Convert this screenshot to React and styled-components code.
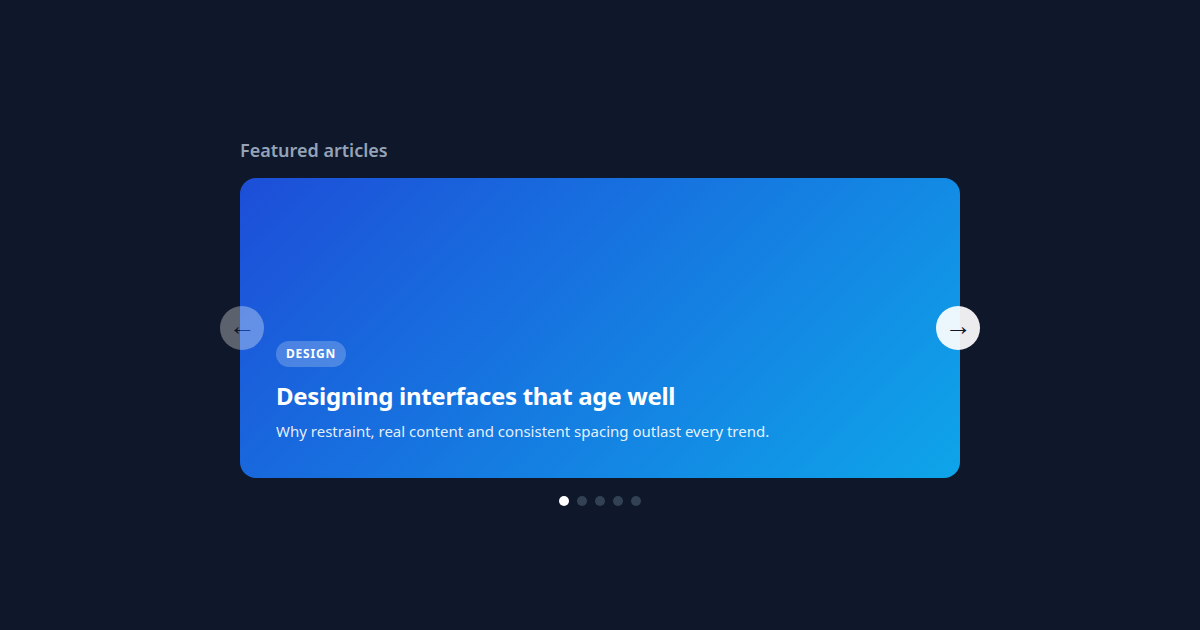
import styled, { createGlobalStyle } from "styled-components";

const GlobalStyle = createGlobalStyle`
  body {
    margin: 0;
    background: #0f172a;
    font-family: "Noto Sans", "Open Sans", sans-serif;
  }
`;

const Page = styled.div`
  width: 1200px;
  height: 630px;
  display: flex;
  align-items: center;
  justify-content: center;
`;

const Section = styled.section`
  width: 720px;
  display: flex;
  flex-direction: column;
  padding-top: 14px;
`;

const Heading = styled.h2`
  margin: 0 0 16px;
  font-size: 18px;
  font-weight: 600;
  color: #94a3b8;
  line-height: 24px;
`;

const Viewport = styled.div`
  position: relative;
`;

const Slide = styled.article`
  height: 300px;
  border-radius: 16px;
  background: linear-gradient(135deg, #1d4ed8 0%, #0ea5e9 100%);
  display: flex;
  flex-direction: column;
  justify-content: flex-end;
  padding: 0 36px 37px;
  box-sizing: border-box;
  color: #fff;
`;

const Tag = styled.span`
  align-self: flex-start;
  padding: 5px 10px;
  border-radius: 999px;
  background: rgba(255, 255, 255, 0.22);
  font-size: 12px;
  font-weight: 700;
  letter-spacing: 0.8px;
  line-height: 16px;
`;

const Title = styled.h3`
  margin: 13px 0 9px;
  font-size: 24px;
  font-weight: 700;
  letter-spacing: -0.3px;
  line-height: 32px;
`;

const Summary = styled.p`
  margin: 0;
  font-size: 15px;
  line-height: 20px;
  color: rgba(255, 255, 255, 0.9);
`;

const Arrow = styled.button`
  position: absolute;
  top: 50%;
  ${(p) => (p.$side === "left" ? "left: -20px;" : "right: -20px;")}
  transform: translateY(-50%);
  width: 44px;
  height: 44px;
  border: none;
  border-radius: 50%;
  background: rgba(255, 255, 255, 0.92);
  color: #0f172a;
  font-size: 27px;
  line-height: 1;
  display: flex;
  align-items: center;
  justify-content: center;
  padding: 0 0 3px;
  font-family: "Liberation Sans", sans-serif;
  opacity: ${(p) => (p.disabled ? 0.35 : 1)};
`;

const Dots = styled.div`
  display: flex;
  justify-content: center;
  gap: 8px;
  margin-top: 18px;
`;

const Dot = styled.span`
  width: 10px;
  height: 10px;
  border-radius: 50%;
  background: ${(p) => (p.$active ? "#ffffff" : "#334155")};
`;

const slides = [0, 1, 2, 3, 4];

export default function App() {
  const current = 0;
  return (
    <>
      <GlobalStyle />
      <Page>
        <Section>
          <Heading>Featured articles</Heading>
          <Viewport>
            <Slide>
              <Tag>DESIGN</Tag>
              <Title>Designing interfaces that age well</Title>
              <Summary>
                Why restraint, real content and consistent spacing outlast every
                trend.
              </Summary>
            </Slide>
            <Arrow $side="left" disabled aria-label="Previous">
              ←
            </Arrow>
            <Arrow $side="right" aria-label="Next">
              →
            </Arrow>
          </Viewport>
          <Dots>
            {slides.map((i) => (
              <Dot key={i} $active={i === current} />
            ))}
          </Dots>
        </Section>
      </Page>
    </>
  );
}
